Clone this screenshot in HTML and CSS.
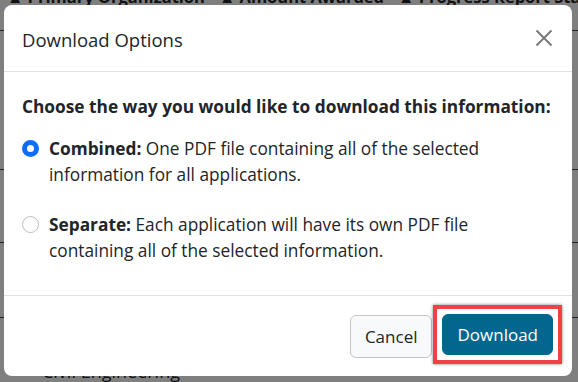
FILE: index.html
```html
<!DOCTYPE html>
<html lang="en">
<head>
  <meta charset="UTF-8" />
  <title>Download Options</title>
  <link rel="stylesheet" href="styles.css">
</head>
<body>

  <!-- Page behind the dialog -->
  <div class="page">
    <div class="table-head">
      <span>&#9650; Primary Organization</span>
      <span>&#9650; Amount Awarded</span>
      <span>&#9650; Progress Report Status</span>
    </div>
    <div class="table-row"></div>
    <div class="table-row"></div>
    <div class="table-row"></div>
    <div class="table-row last"><span>Civil Engineering</span></div>
  </div>

  <div class="backdrop"></div>

  <!-- Dialog -->
  <div class="modal">
    <div class="modal-header">
      <h5 class="modal-title">Download Options</h5>
      <button class="btn-close" aria-label="Close">
        <svg width="18" height="18" viewBox="0 0 18 18">
          <path d="M1.5 1.5 L16.5 16.5 M16.5 1.5 L1.5 16.5" stroke="#7a7a7a" stroke-width="2" fill="none"/>
        </svg>
      </button>
    </div>

    <div class="modal-body">
      <p class="question">Choose the way you would like to download this information:</p>

      <label class="option">
        <input type="radio" name="mode" checked>
        <span><b>Combined:</b> One PDF file containing all of the selected information for all applications.</span>
      </label>

      <label class="option">
        <input type="radio" name="mode">
        <span><b>Separate:</b> Each application will have its own PDF file containing all of the selected information.</span>
      </label>
    </div>

    <div class="modal-footer">
      <button class="btn btn-cancel">Cancel</button>
      <div class="highlight">
        <button class="btn btn-download">Download</button>
      </div>
    </div>
  </div>

</body>
</html>
```

FILE: styles.css
```css
* {
  box-sizing: border-box;
  margin: 0;
  padding: 0;
}

body {
  font-family: 'Open Sans', 'Noto Sans', sans-serif;
  color: #212529;
  background-color: #fff;
  width: 578px;
  height: 382px;
  overflow: hidden;
  position: relative;
}

/* Background page */
.page {
  width: 578px;
  height: 382px;
  overflow: hidden;
}

.table-head {
  display: flex;
  gap: 14px;
  padding-left: 7px;
  font-weight: bold;
  font-size: 16.5px;
  line-height: 20px;
  margin-top: -13px;
  height: 44px;
  border-bottom: 1px solid #444;
  white-space: nowrap;
}

.table-row {
  height: 139px;
  border-bottom: 1px solid #444;
}

.table-row:nth-child(3) {
  height: 73px;
}

.table-row:nth-child(4) {
  height: 75px;
}

.table-row.last {
  border-bottom: none;
  padding: 41px 0 0 42px;
  font-size: 18px;
  line-height: 24px;
}

.backdrop {
  position: absolute;
  inset: 0;
  background-color: rgba(0, 0, 0, 0.5);
}

/* Dialog */
.modal {
  position: absolute;
  top: 5px;
  left: 4px;
  width: 568px;
  height: 371px;
  background-color: #fff;
  border-radius: 8px;
  display: flex;
  flex-direction: column;
}

.modal-header {
  display: flex;
  align-items: center;
  justify-content: space-between;
  height: 67px;
  padding: 0 19px 0 18px;
  border-bottom: 1px solid #dee2e6;
}

.modal-title {
  font-size: 18.5px;
  font-weight: 400;
  color: #212529;
  padding-top: 2px;
}

.btn-close {
  background: none;
  border: none;
  width: 18px;
  height: 18px;
  display: flex;
  cursor: pointer;
}

.modal-body {
  flex: 1;
  padding: 22px 10px 0 18px;
  font-size: 17.3px;
  line-height: 26px;
}

.question {
  font-weight: bold;
  margin-bottom: 16px;
}

.option {
  display: flex;
  align-items: flex-start;
  gap: 10px;
  margin-bottom: 24px;
  padding-right: 52px;
}

.option b {
  font-weight: bold;
}

.option input {
  appearance: none;
  flex: none;
  width: 17px;
  height: 17px;
  margin-top: 4px;
  border-radius: 50%;
  border: 1px solid #bdbdbd;
  background-color: #fff;
}

.option input:checked {
  border: 5px solid #0d6efd;
}

.modal-footer {
  display: flex;
  justify-content: flex-end;
  align-items: center;
  gap: 1px;
  height: 81px;
  padding: 0 10px 3px 0;
  border-top: 1px solid #dee2e6;
}

.btn {
  font-family: inherit;
  font-size: 17px;
  border-radius: 6px;
  cursor: pointer;
}

.btn-cancel {
  height: 43px;
  padding: 0 14px;
  margin-top: 3px;
  background-color: #f8f9fa;
  border: 1px solid #c4c4c4;
  color: #212529;
}

.highlight {
  padding: 5px;
  border: 4px solid #f14145;
  box-shadow: 0 0 3px rgba(0, 0, 0, 0.5);
}

.btn-download {
  height: 41px;
  padding: 0 14px;
  background-color: #03668f;
  border: 1px solid #03668f;
  color: #fff;
}
```
